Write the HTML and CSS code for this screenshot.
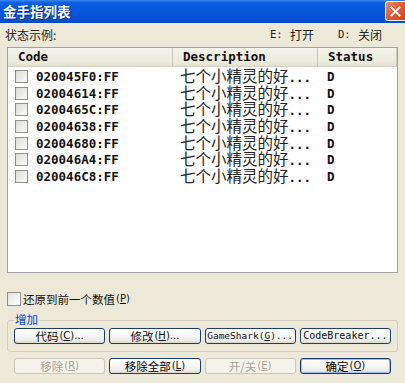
FILE: index.html
```html
<!DOCTYPE html>
<html>
<head>
<meta charset="utf-8">
<link rel="stylesheet" href="styles.css">
</head>
<body>
<div class="window">
  <div class="titlebar">
    <span class="title">金手指列表</span>
    <span class="close"><svg width="11" height="11" viewBox="0 0 11 11"><path d="M1.5 1.5 L9.5 9.5 M9.5 1.5 L1.5 9.5" stroke="#fff" stroke-width="2" stroke-linecap="square"/></svg></span>
  </div>
  <div class="content">
    <div class="legend-row">
      <span class="cjk">状态示例:</span>
      <span class="legend-items">
        <span class="legend-item"><span class="mono">E:</span><span class="cjk">打开</span></span>
        <span class="legend-item"><span class="mono">D:</span><span class="cjk">关闭</span></span>
      </span>
    </div>
    <div class="list">
      <div class="list-header">
        <div class="hcell">Code</div>
        <div class="hcell">Description</div>
        <div class="hcell">Status</div>
        <div class="hfill"></div>
      </div>
      <div class="row"><div class="code"><span class="check"></span>020045F0:FF</div><div class="desc"><span class="cjk">七个小精灵的好</span>...</div><div class="status">D</div></div>
      <div class="row"><div class="code"><span class="check"></span>02004614:FF</div><div class="desc"><span class="cjk">七个小精灵的好</span>...</div><div class="status">D</div></div>
      <div class="row"><div class="code"><span class="check"></span>0200465C:FF</div><div class="desc"><span class="cjk">七个小精灵的好</span>...</div><div class="status">D</div></div>
      <div class="row"><div class="code"><span class="check"></span>02004638:FF</div><div class="desc"><span class="cjk">七个小精灵的好</span>...</div><div class="status">D</div></div>
      <div class="row"><div class="code"><span class="check"></span>02004680:FF</div><div class="desc"><span class="cjk">七个小精灵的好</span>...</div><div class="status">D</div></div>
      <div class="row"><div class="code"><span class="check"></span>020046A4:FF</div><div class="desc"><span class="cjk">七个小精灵的好</span>...</div><div class="status">D</div></div>
      <div class="row"><div class="code"><span class="check"></span>020046C8:FF</div><div class="desc"><span class="cjk">七个小精灵的好</span>...</div><div class="status">D</div></div>
    </div>
    <div class="restore">
      <span class="check big"></span>
      <span class="cjk">还原到前一个数值</span><span class="acc">(<u>P</u>)</span>
    </div>
    <fieldset class="group">
      <legend class="group-label">增加</legend>
      <div class="btn-row">
        <button class="btn"><span class="cjk">代码</span> <span class="acc">(<u>C</u>)...</span></button>
        <button class="btn"><span class="cjk">修改</span> <span class="acc">(<u>H</u>)...</span></button>
        <button class="btn mono-btn gs">GameShark(<u>G</u>)...</button>
        <button class="btn mono-btn">CodeBreaker...</button>
      </div>
    </fieldset>
    <div class="btn-row bottom">
      <button class="btn disabled"><span class="cjk">移除</span> <span class="acc">(<u>R</u>)</span></button>
      <button class="btn"><span class="cjk strong">移除全部</span> <span class="acc">(<u>L</u>)</span></button>
      <button class="btn disabled"><span class="cjk">开/关</span> <span class="acc">(<u>E</u>)</span></button>
      <button class="btn default"><span class="cjk strong">确定</span> <span class="acc">(<u>O</u>)</span></button>
    </div>
  </div>
</div>
</body>
</html>
```
FILE: styles.css
```css
html, body {
  margin: 0;
  padding: 0;
  background: #ECE9D8;
}
body {
  width: 405px;
  height: 383px;
  overflow: hidden;
  font-family: "Noto Sans CJK SC", "DejaVu Sans", sans-serif;
  color: #000;
}
.window {
  display: flex;
  flex-direction: column;
  width: 405px;
  height: 383px;
}
.titlebar {
  height: 23px;
  flex: none;
  display: flex;
  align-items: center;
  justify-content: space-between;
  background: linear-gradient(#3C86EE 0, #0C5FE2 12%, #0558DA 45%, #0652D2 85%, #0A49BE 100%);
  box-sizing: border-box;
  padding: 0 0 2px 3px;
}
.title {
  color: #fff;
  font-family: "Noto Sans CJK SC", sans-serif;
  font-weight: bold;
  font-size: 13.5px;
  line-height: 16px;
  text-shadow: 1px 1px 0 #0A2F8A;
}
.close {
  width: 20px;
  height: 20px;
  box-sizing: border-box;
  border: 1px solid #fff;
  border-right: none;
  border-radius: 3px 0 0 3px;
  background: linear-gradient(135deg, #F08A62 0%, #E2582E 50%, #CC4722 100%);
  display: flex;
  align-items: center;
  justify-content: center;
  margin-top: 1px;
}
.content {
  padding: 0 7px;
  display: flex;
  flex-direction: column;
}
.cjk {
  font-family: "Noto Sans CJK SC", sans-serif;
}
.mono {
  font-family: "DejaVu Sans Mono", monospace;
}
.legend-row {
  height: 22px;
  margin-bottom: 2px;
  display: flex;
  align-items: center;
  justify-content: space-between;
  font-size: 12px;
  margin-left: -2px;
  color: #222;
}
.legend-items {
  display: flex;
  gap: 24px;
  padding-right: 16px;
}
.legend-item {
  display: flex;
  align-items: center;
}
.legend-items .mono {
  font-size: 10.5px;
  width: 20px;
}
.list {
  height: 226px;
  box-sizing: border-box;
  border: 1px solid #A0A3A6;
  background: #fff;
}
.list-header {
  display: grid;
  grid-template-columns: 165px 145px 79px 1fr;
  height: 18px;
  border-bottom: 1px solid #D6D3C4;
  background: linear-gradient(#F4F3EC, #EBEADB 80%, #E2E0D0);
}
.hcell {
  font-family: "DejaVu Sans Mono", monospace;
  font-weight: bold;
  font-size: 12.5px;
  line-height: 18px;
  padding-left: 10px;
  border-right: 1px solid #C9C7B6;
  color: #111;
}
.row {
  display: grid;
  grid-template-columns: 165px 145px 1fr;
  height: 16.67px;
  align-items: center;
  font-family: "DejaVu Sans Mono", monospace;
  font-weight: bold;
  font-size: 12.5px;
  color: #111;
}
.code {
  display: flex;
  align-items: center;
  gap: 8px;
  padding-left: 7px;
}
.check {
  width: 11px;
  height: 11px;
  flex: none;
  border: 1px solid #8E9092;
  background: linear-gradient(135deg, #DDDDD8, #FAFAF8);
}
.desc {
  padding-left: 7px;
  white-space: nowrap;
  line-height: 16px;
}
.desc .cjk {
  font-weight: normal;
  font-size: 15.5px;
  color: #222;
}
.status {
  padding-left: 9px;
}
.restore {
  margin-top: 19px;
  height: 13px;
  display: flex;
  align-items: center;
  font-size: 11.5px;
  color: #111;
}
.check.big {
  width: 12px;
  height: 12px;
  margin-right: 2px;
  background: linear-gradient(135deg, #E2E2DC, #FFFFFF);
}
.acc {
  font-family: "DejaVu Sans", sans-serif;
  font-size: 10px;
  margin-left: 1px;
}
.group {
  margin: 8px 0 0;
  padding: 0 6px 7px;
  border: 1px solid #D0D0BF;
  border-radius: 3px;
  min-inline-size: 0;
}
.group-label {
  color: #0046D5;
  font-size: 11.5px;
  line-height: 12px;
  padding: 0 1px 3px;
}
.btn-row {
  display: flex;
  gap: 4px;
}
.btn-row.bottom {
  margin-top: 6px;
  padding: 0 7px;
}
.btn {
  flex: 1;
  height: 16px;
  box-sizing: border-box;
  padding: 0;
  border: 1px solid #1C3F6E;
  border-radius: 3px;
  background: linear-gradient(#FFFFFF 0%, #F6F6F2 50%, #EBEAE3 85%, #D8D5CB 100%);
  font-family: "Noto Sans CJK SC", sans-serif;
  font-size: 11.5px;
  line-height: 14px;
  color: #111;
  display: flex;
  align-items: center;
  justify-content: center;
  white-space: nowrap;
}
.btn .strong {
  color: #000;
}
.mono-btn {
  font-family: "DejaVu Sans Mono", monospace;
  font-size: 10px;
}
.mono-btn.gs {
  font-size: 9.5px;
}
.btn.disabled {
  border-color: #C8C6B8;
  background: #F4F3EC;
  color: #A7A597;
}
.btn.default {
  border-color: #17396A;
  box-shadow: inset 0 0 0 1px #9FBCEB;
}
```
